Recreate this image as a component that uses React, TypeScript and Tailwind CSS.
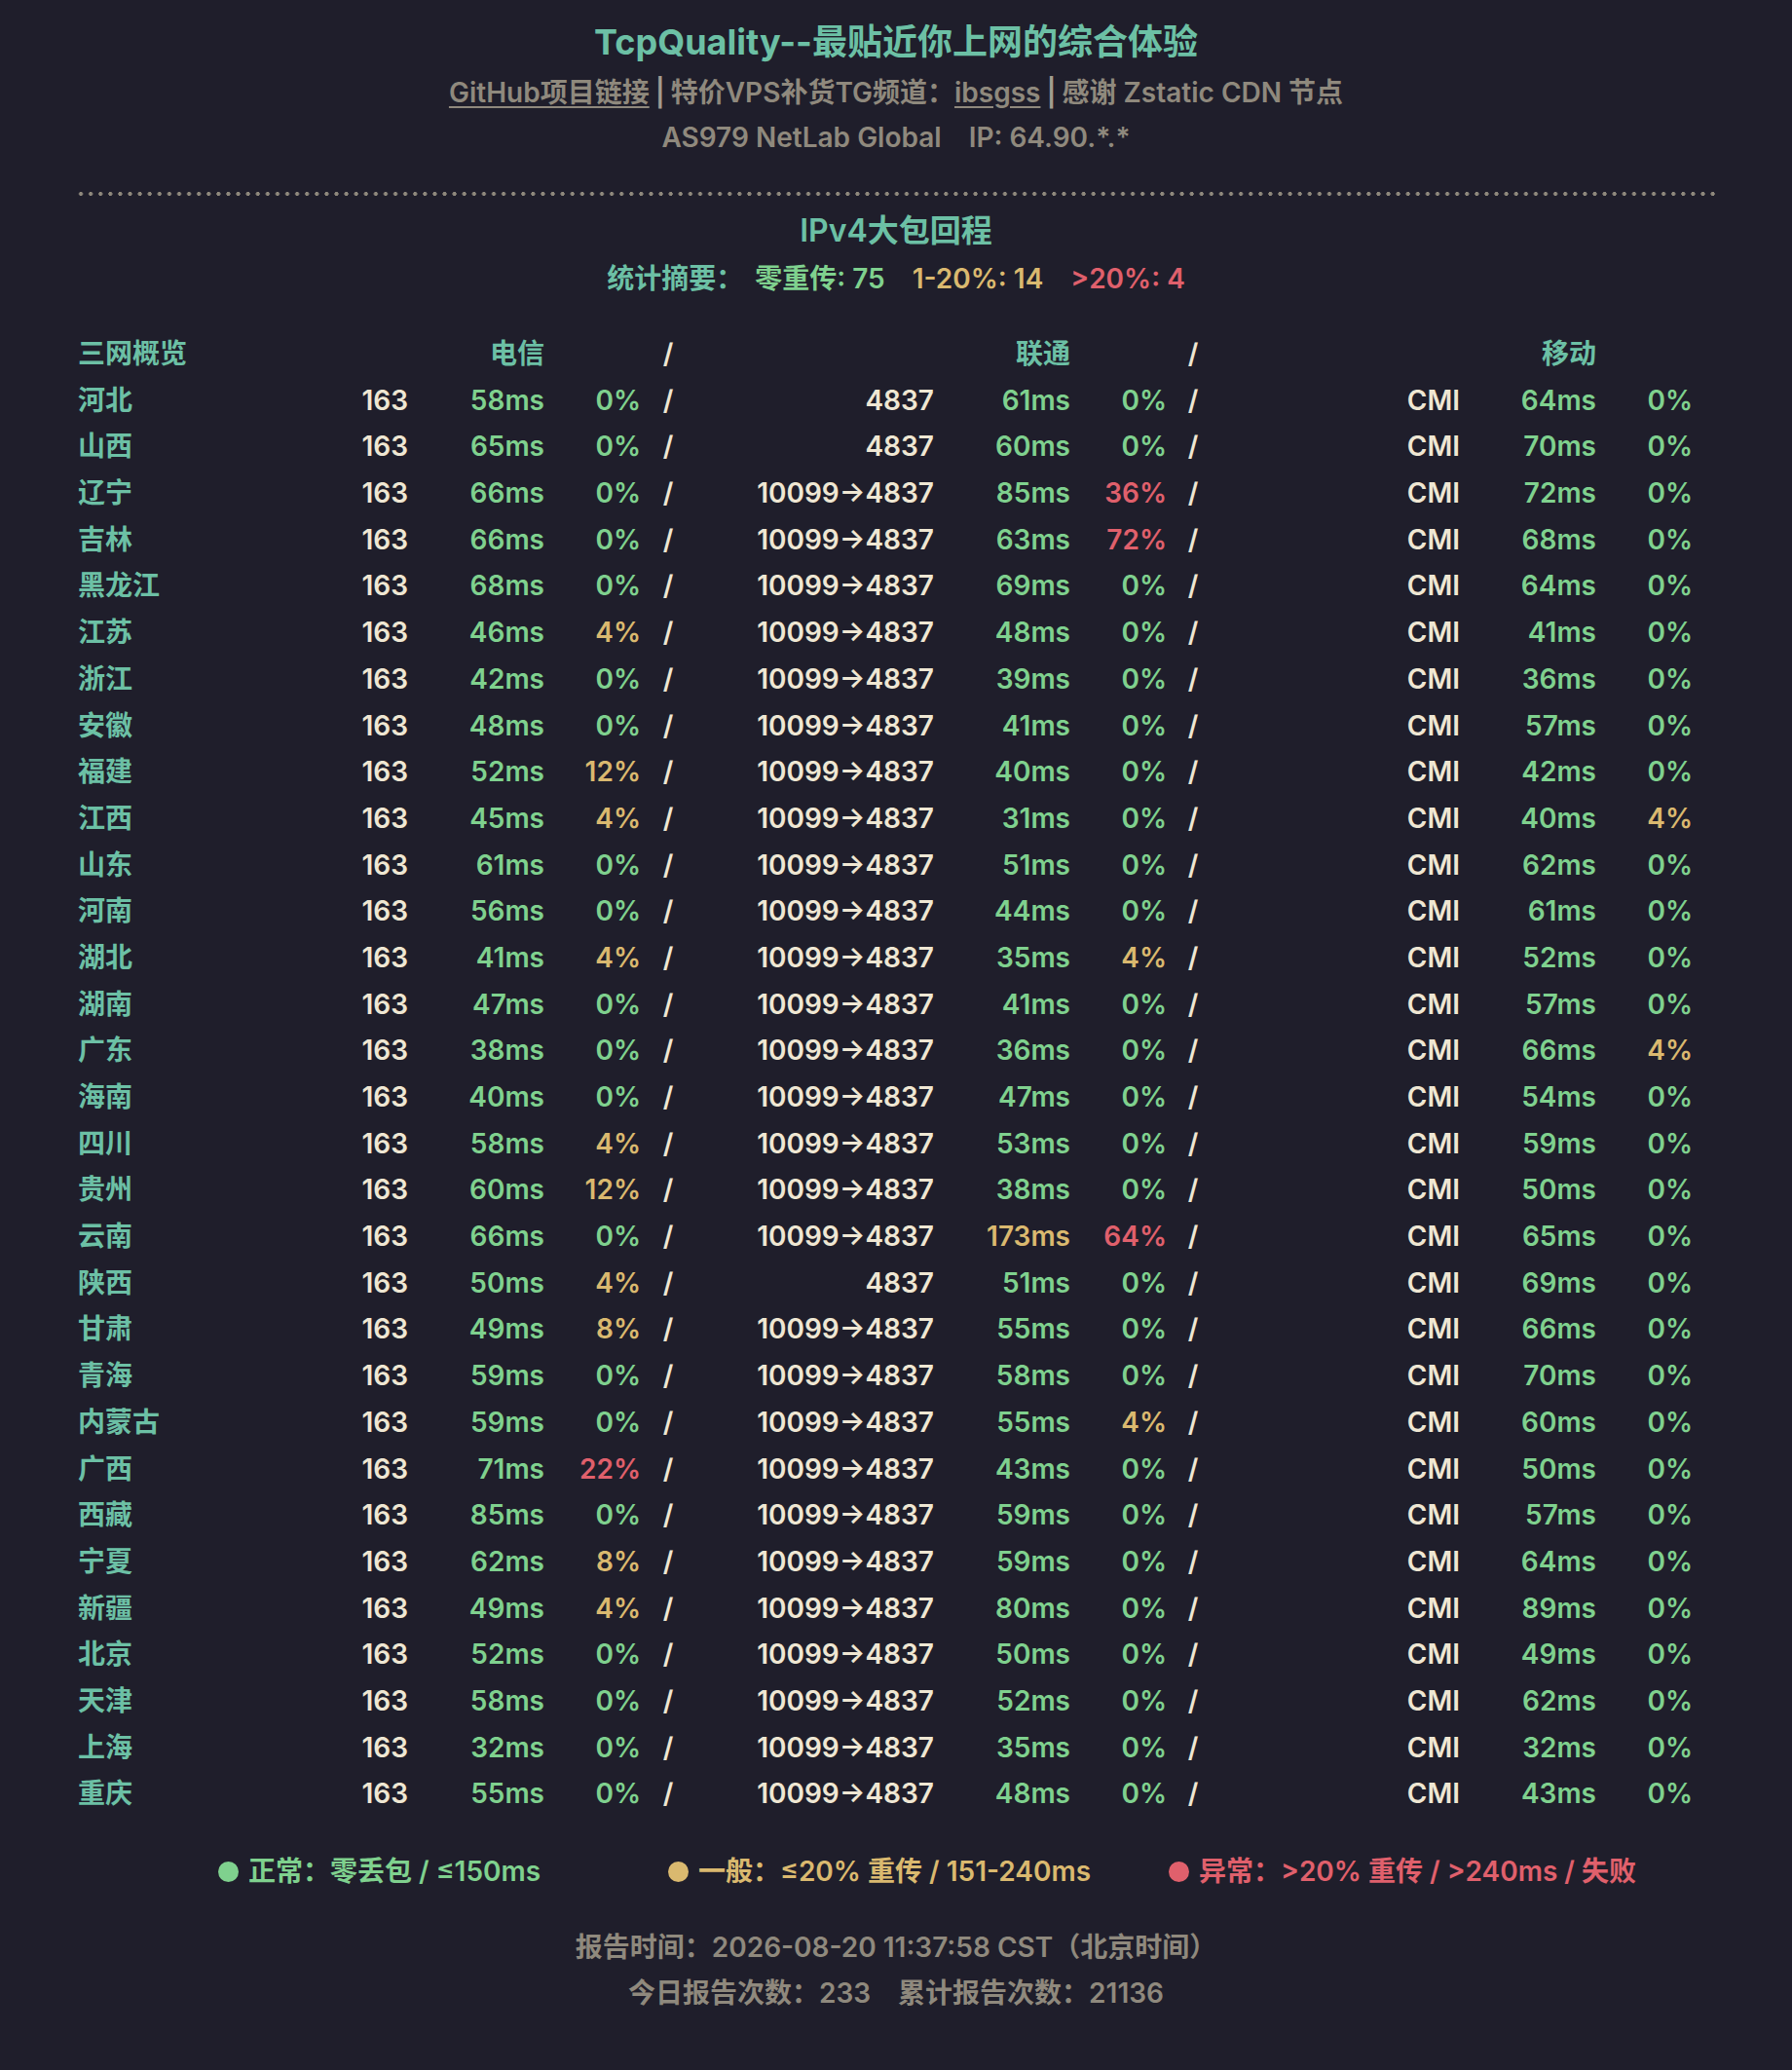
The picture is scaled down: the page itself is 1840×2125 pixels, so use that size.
import React from "react"

type Row = [string, number, number, string, number, number, number, number]

const rows: Row[] = [
  ["河北", 58, 0, "4837", 61, 0, 64, 0],
  ["山西", 65, 0, "4837", 60, 0, 70, 0],
  ["辽宁", 66, 0, "10099→4837", 85, 36, 72, 0],
  ["吉林", 66, 0, "10099→4837", 63, 72, 68, 0],
  ["黑龙江", 68, 0, "10099→4837", 69, 0, 64, 0],
  ["江苏", 46, 4, "10099→4837", 48, 0, 41, 0],
  ["浙江", 42, 0, "10099→4837", 39, 0, 36, 0],
  ["安徽", 48, 0, "10099→4837", 41, 0, 57, 0],
  ["福建", 52, 12, "10099→4837", 40, 0, 42, 0],
  ["江西", 45, 4, "10099→4837", 31, 0, 40, 4],
  ["山东", 61, 0, "10099→4837", 51, 0, 62, 0],
  ["河南", 56, 0, "10099→4837", 44, 0, 61, 0],
  ["湖北", 41, 4, "10099→4837", 35, 4, 52, 0],
  ["湖南", 47, 0, "10099→4837", 41, 0, 57, 0],
  ["广东", 38, 0, "10099→4837", 36, 0, 66, 4],
  ["海南", 40, 0, "10099→4837", 47, 0, 54, 0],
  ["四川", 58, 4, "10099→4837", 53, 0, 59, 0],
  ["贵州", 60, 12, "10099→4837", 38, 0, 50, 0],
  ["云南", 66, 0, "10099→4837", 173, 64, 65, 0],
  ["陕西", 50, 4, "4837", 51, 0, 69, 0],
  ["甘肃", 49, 8, "10099→4837", 55, 0, 66, 0],
  ["青海", 59, 0, "10099→4837", 58, 0, 70, 0],
  ["内蒙古", 59, 0, "10099→4837", 55, 4, 60, 0],
  ["广西", 71, 22, "10099→4837", 43, 0, 50, 0],
  ["西藏", 85, 0, "10099→4837", 59, 0, 57, 0],
  ["宁夏", 62, 8, "10099→4837", 59, 0, 64, 0],
  ["新疆", 49, 4, "10099→4837", 80, 0, 89, 0],
  ["北京", 52, 0, "10099→4837", 50, 0, 49, 0],
  ["天津", 58, 0, "10099→4837", 52, 0, 62, 0],
  ["上海", 32, 0, "10099→4837", 35, 0, 32, 0],
  ["重庆", 55, 0, "10099→4837", 48, 0, 43, 0],
]

const msColor = (ms: number) =>
  ms <= 150 ? "text-[#7fd18e]" : ms <= 240 ? "text-[#dab96f]" : "text-[#e0606c]"

const pctColor = (p: number) =>
  p === 0 ? "text-[#7fd18e]" : p <= 20 ? "text-[#dab96f]" : "text-[#e0606c]"

const grid =
  "grid grid-cols-[220px_119px_140px_99px_56px_245px_140px_99px_54px_247px_140px_99px] h-[47.7px] leading-[47.7px] items-center whitespace-nowrap"

function DataRow({ r }: { r: Row }) {
  const [name, ms1, p1, asn2, ms2, p2, ms3, p3] = r
  return (
    <div className={grid}>
      <span className="text-[#6cc0a5]">{name}</span>
      <span className="text-right text-[#efe7d3]">163</span>
      <span className={`text-right ${msColor(ms1)}`}>{ms1}ms</span>
      <span className={`text-right ${pctColor(p1)}`}>{p1}%</span>
      <span className="text-center text-[#efe7d3]">/</span>
      <span className="text-right text-[#efe7d3]">{asn2}</span>
      <span className={`text-right ${msColor(ms2)}`}>{ms2}ms</span>
      <span className={`text-right ${pctColor(p2)}`}>{p2}%</span>
      <span className="text-center text-[#efe7d3]">/</span>
      <span className="text-right text-[#efe7d3]">CMI</span>
      <span className={`text-right ${msColor(ms3)}`}>{ms3}ms</span>
      <span className={`text-right ${pctColor(p3)}`}>{p3}%</span>
    </div>
  )
}

export default function App() {
  return (
    <div className="min-h-[2125px] bg-[#1f1e2b] font-['Inter','Noto_Sans_CJK_SC',sans-serif] font-semibold text-[#8f897d]">
      <div className="pt-[19px] text-center">
        <h1 className="text-[36px] leading-[48px] font-bold text-[#6cc0a5]">
          TcpQuality--最贴近你上网的综合体验
        </h1>
        <p className="mt-[8px] text-[28px] leading-[40px]">
          <a href="#" className="underline underline-offset-4">GitHub项目链接</a>
          <span className="mx-[6px] text-[#a29c8f]">|</span>
          特价VPS补货TG频道：<a href="#" className="underline underline-offset-4">ibsgss</a>
          <span className="mx-[6px] text-[#a29c8f]">|</span>
          感谢 Zstatic CDN 节点
        </p>
        <p className="mt-[6px] text-[28px] leading-[40px]">
          AS979 NetLab Global<span className="inline-block w-[28px]" />IP: 64.90.*.*
        </p>
      </div>

      <div className="mx-[78px] mt-[36px] h-[4px] bg-[radial-gradient(circle,#8f897d_1.8px,transparent_2.2px)] bg-[length:10.1px_4px]" />

      <div className="mt-[14px] text-center">
        <h2 className="text-[32px] leading-[44px] text-[#6cc0a5]">IPv4大包回程</h2>
        <p className="mt-[7px] text-[28px] leading-[40px]">
          <span className="text-[#6cc0a5]">统计摘要：</span>
          <span className="ml-[12px] text-[#7fd18e]">零重传: 75</span>
          <span className="ml-[28px] text-[#dab96f]">1-20%: 14</span>
          <span className="ml-[28px] text-[#e0606c]">&gt;20%: 4</span>
        </p>
      </div>

      <div className="mt-[34px] pl-[80px] text-[28px]">
        <div className={grid}>
          <span className="text-[#6cc0a5]">三网概览</span>
          <span />
          <span className="text-right text-[#6cc0a5]">电信</span>
          <span />
          <span className="text-center text-[#efe7d3]">/</span>
          <span />
          <span className="text-right text-[#6cc0a5]">联通</span>
          <span />
          <span className="text-center text-[#efe7d3]">/</span>
          <span />
          <span className="text-right text-[#6cc0a5]">移动</span>
          <span />
        </div>
        {rows.map((r) => (
          <DataRow key={r[0]} r={r} />
        ))}
      </div>

      <div className="mt-[35px] flex items-center pl-[224px] text-[28px] leading-[40px] whitespace-nowrap">
        <div className="flex items-center text-[#7fd18e]">
          <span className="mr-[10px] h-[21px] w-[21px] rounded-full bg-[#7fd18e]" />
          正常：零丢包 / ≤150ms
        </div>
        <div className="ml-[131px] flex items-center text-[#dab96f]">
          <span className="mr-[10px] h-[21px] w-[21px] rounded-full bg-[#dab96f]" />
          一般：≤20% 重传 / 151-240ms
        </div>
        <div className="ml-[80px] flex items-center text-[#e0606c]">
          <span className="mr-[10px] h-[21px] w-[21px] rounded-full bg-[#e0606c]" />
          异常：&gt;20% 重传 / &gt;240ms / 失败
        </div>
      </div>

      <div className="mt-[35px] text-center text-[28px] leading-[47px]">
        <p>报告时间：2026-08-20 11:37:58 CST（北京时间）</p>
        <p>
          今日报告次数：233<span className="inline-block w-[28px]" />累计报告次数：21136
        </p>
      </div>
    </div>
  )
}
